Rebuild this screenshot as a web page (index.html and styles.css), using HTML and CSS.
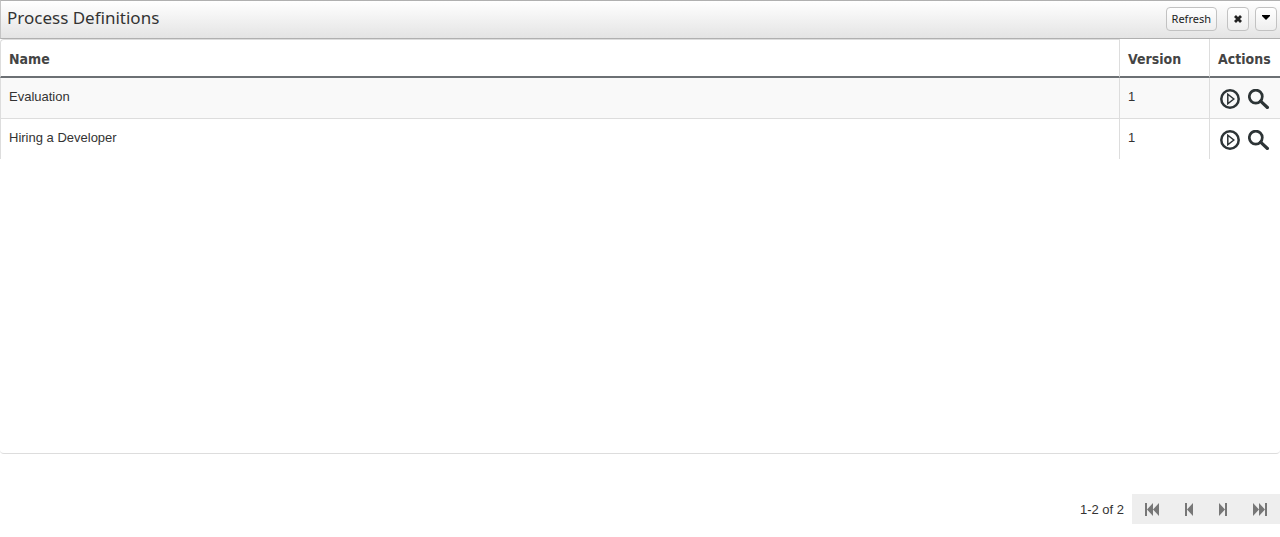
FILE: index.html
```html
<!DOCTYPE html>
<html lang="en">
<head>
  <meta charset="UTF-8">
  <meta name="viewport" content="width=device-width, initial-scale=1.0">
  <title>Process Definitions</title>
  <link rel="stylesheet" href="styles.css">
</head>
<body>
  <svg width="0" height="0" class="symbols">
    <symbol id="play" viewBox="0 0 20 20">
      <circle cx="10" cy="10" r="8.7" fill="none" stroke="currentColor" stroke-width="2.5"/>
      <path d="M7.800 5.200v9.600l6-4.800z" fill="none" stroke="currentColor" stroke-width="1.5"/>
    </symbol>
    <symbol id="search" viewBox="0 0 22 20">
      <circle cx="7.800" cy="7.600" r="6.500" fill="none" stroke="currentColor" stroke-width="2.700"/>
      <path d="M12.600 12.200l6.800 6.300" fill="none" stroke="currentColor" stroke-width="3.200" stroke-linecap="round"/>
    </symbol>
  </svg>

  <header class="panel-header">
    <h1>Process Definitions</h1>
    <div class="toolbar">
      <button type="button" class="btn">Refresh</button>
      <button type="button" class="btn btn-icon" aria-label="Close">
        <svg width="10" height="10" viewBox="0 0 10 10"><path d="M2 2l6 6M8 2l-6 6" stroke="#222" stroke-width="2.8"/></svg>
      </button>
      <button type="button" class="btn btn-icon btn-menu" aria-label="Menu">
        <svg width="8" height="5" viewBox="0 0 8 5"><path d="M0 0h8v1L4 5 0 1z" fill="#000"/></svg>
      </button>
    </div>
  </header>

  <main class="list">
    <table>
      <thead>
        <tr><th>Name</th><th class="version">Version</th><th class="actions">Actions</th></tr>
      </thead>
      <tbody>
        <tr>
          <td>Evaluation</td>
          <td>1</td>
          <td>
            <div class="icons">
              <button type="button" aria-label="Start"><svg width="20" height="20"><use href="#play"/></svg></button>
              <button type="button" aria-label="View"><svg width="22" height="20"><use href="#search"/></svg></button>
            </div>
          </td>
        </tr>
        <tr>
          <td>Hiring a Developer</td>
          <td>1</td>
          <td>
            <div class="icons">
              <button type="button" aria-label="Start"><svg width="20" height="20"><use href="#play"/></svg></button>
              <button type="button" aria-label="View"><svg width="22" height="20"><use href="#search"/></svg></button>
            </div>
          </td>
        </tr>
      </tbody>
    </table>
  </main>

  <footer class="pager">
    <span>1-2 of 2</span>
    <div class="pager-buttons">
      <button type="button" aria-label="First page">
        <svg width="14" height="13" viewBox="0 0 14 13"><path d="M0 0h2v13H0zM8 0v13L2 6.500zM14 0v13L8 6.500z"/></svg>
      </button>
      <button type="button" aria-label="Previous page">
        <svg width="8" height="13" viewBox="0 0 8 13"><path d="M0 0h2v13H0zM8 0v13L2 6.500z"/></svg>
      </button>
      <button type="button" aria-label="Next page">
        <svg width="8" height="13" viewBox="0 0 8 13"><path d="M6 0h2v13H6zM0 0v13L6 6.500z"/></svg>
      </button>
      <button type="button" aria-label="Last page">
        <svg width="14" height="13" viewBox="0 0 14 13"><path d="M12 0h2v13h-2zM6 0v13L12 6.500zM0 0v13L6 6.500z"/></svg>
      </button>
    </div>
  </footer>
</body>
</html>
```

FILE: styles.css
```css
* {
  box-sizing: border-box;
}
body {
  display: flex;
  flex-direction: column;
  min-height: 100vh;
  margin: 0;
  background: #fff;
  color: #333;
  font: 13px/20px "Liberation Sans", Arial, sans-serif;
}
button {
  padding: 0;
  border: 0;
  background: none;
  color: inherit;
  cursor: pointer;
}
svg {
  display: block;
}
.symbols {
  position: absolute;
}

.panel-header {
  display: flex;
  justify-content: space-between;
  padding: 6px 3px 7px 6px;
  border: 1px solid #b0b0b0;
  border-right: 0;
  border-left-color: #c4c4c4;
  background: linear-gradient(#fff, #e4e4e4);
}
.panel-header h1 {
  margin: 0;
  font: 17px/22px "Noto Sans", Tahoma, sans-serif;
}
.toolbar {
  display: flex;
  gap: 6px;
}
.btn {
  height: 24px;
  padding: 0 5px;
  border: 1px solid #c2c2c2;
  border-radius: 4px;
  background: linear-gradient(#fff, #eee);
  color: #222;
  font: 11px/22px "Noto Sans", Tahoma, sans-serif;
}
.btn-icon {
  display: flex;
  align-items: center;
  justify-content: center;
  width: 22px;
  margin-left: 4px;
}
.btn-menu {
  margin-left: 0;
  padding-bottom: 4px;
}

.list {
  flex: 1;
  border-bottom: 1px solid #ddd;
  border-radius: 4px;
}
table {
  width: 100%;
  border-collapse: separate;
  border-spacing: 0;
  table-layout: fixed;
}
th,
td {
  padding: 9px 8px;
  border-left: 1px solid #ddd;
  text-align: left;
  vertical-align: top;
}
th {
  padding: 10px 0 7px 8px;
  border-bottom: 2px solid #6c7074;
  color: #444;
  font: bold 14px/20px "DejaVu Sans Condensed", Tahoma, "DejaVu Sans", sans-serif;
}
th:first-child {
  border-top: 1px solid #ddd;
  border-top-left-radius: 4px;
  padding-top: 9px;
}
tbody tr:nth-child(odd) td {
  border-bottom: 1px solid #ddd;
  background: #f9f9f9;
}
td:last-child {
  padding-bottom: 9px;
}
.version {
  width: 90px;
}
.actions {
  width: 71px;
}
.icons {
  display: flex;
  gap: 8px;
  padding: 2px 0 0 2px;
  color: #2d3436;
}

.pager {
  display: flex;
  align-items: center;
  justify-content: flex-end;
  gap: 8px;
  margin: 40px 0 13px;
}
.pager span {
  line-height: 18px;
  padding-top: 2px;
}
.pager-buttons {
  display: flex;
  justify-content: space-between;
  width: 148px;
  height: 30px;
  padding: 0 13px;
  background: #eee;
}
.pager-buttons svg {
  fill: #777;
}
```
